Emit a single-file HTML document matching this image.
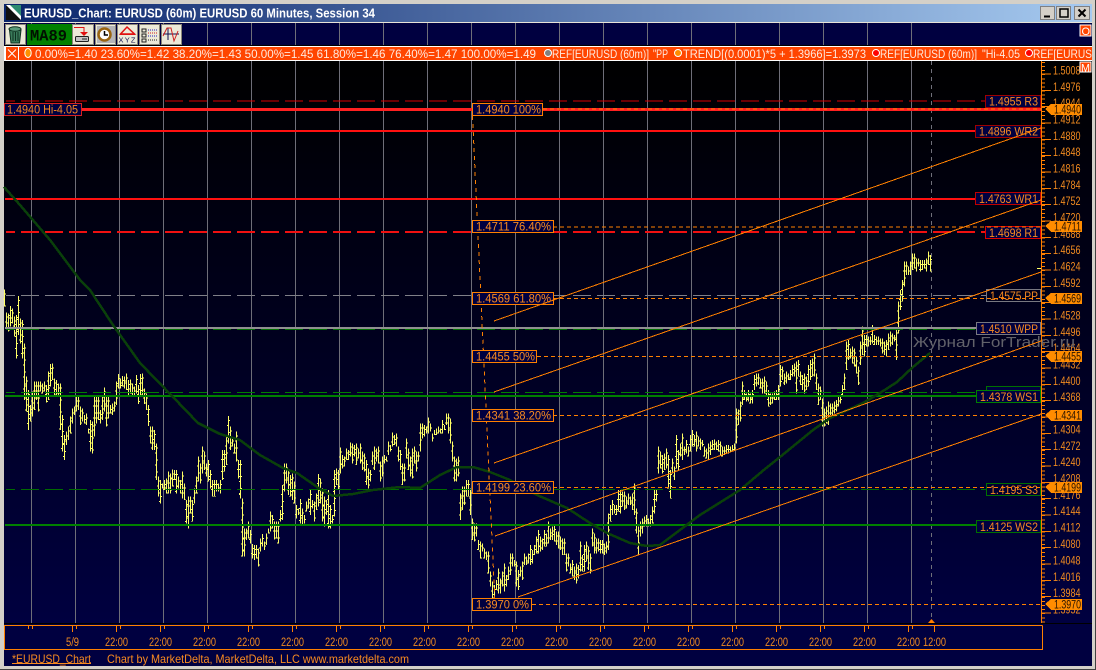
<!DOCTYPE html>
<html><head><meta charset="utf-8"><title>EURUSD_Chart</title>
<style>html,body{margin:0;padding:0;background:#d4d0c8;width:1096px;height:670px;overflow:hidden}svg{display:block}text{font-family:"Liberation Sans","Noto Sans CJK SC",sans-serif}</style></head>
<body>
<svg width="1096" height="670" viewBox="0 0 1096 670" xmlns="http://www.w3.org/2000/svg">
<defs>
<linearGradient id="tg" x1="0" x2="1" y1="0" y2="0"><stop offset="0" stop-color="#0a246a"/><stop offset="1" stop-color="#a6caf0"/></linearGradient>
<linearGradient id="bg" x1="0" x2="0" y1="0" y2="1"><stop offset="0" stop-color="#000"/><stop offset=".08" stop-color="#000004"/><stop offset="1" stop-color="#000040"/></linearGradient>
</defs>
<rect width="1096" height="670" fill="#d4d0c8"/>
<rect x="1095" width="1" height="670" fill="#404040"/><rect y="669" width="1096" height="1" fill="#404040"/>
<rect x="4" y="4" width="1088" height="18" fill="url(#tg)"/>
<rect x="4" y="22" width="1088" height="1" fill="#e8e4d8"/>
<rect x="4" y="23" width="1088" height="22" fill="#000040"/>
<rect x="4" y="45" width="1088" height="1" fill="#000"/>
<rect x="4" y="46" width="1088" height="15" fill="#fff"/>
<rect x="6" y="47" width="12" height="13" fill="#ff4500"/>
<rect x="19" y="47" width="1073" height="13" fill="#ff4500"/>
<rect x="4" y="61" width="1088" height="563" fill="url(#bg)"/>
<rect x="4" y="623" width="1088" height="1" fill="#000"/>
<rect x="4" y="624" width="1088" height="42" fill="#000040"/>

<!-- title icon -->
<rect x="6" y="5" width="15" height="15" fill="#fff"/><polygon points="6,5 6,20 21,20" fill="#101010"/><polygon points="10,5 21,5 21,16" fill="#2e8b70"/>
<text x="24" y="17.5" font-size="13" font-weight="bold" fill="#fff" textLength="351" lengthAdjust="spacingAndGlyphs">EURUSD_Chart: EURUSD (60m) EURUSD 60 Minutes, Session 34</text>

<!-- window buttons -->
<g fill="#d4d0c8" stroke="#808080"><rect x="1040.5" y="6.5" width="14" height="13"/><rect x="1056.5" y="6.5" width="14" height="13"/><rect x="1074.5" y="6.5" width="15" height="13"/></g>
<path d="M1044 16.5h6" stroke="#000" stroke-width="2"/><rect x="1060" y="9" width="8" height="8" fill="none" stroke="#000" stroke-width="1.5"/><path d="M1078.5 9.5l7 7M1085.5 9.5l-7 7" stroke="#000" stroke-width="2"/>

<!-- grid -->
<g shape-rendering="crispEdges">
<path d="M31.5 23V45M75.5 23V45M119.5 23V45M163.5 23V45M207.5 23V45M251.5 23V45M295.5 23V45M339.5 23V45M383.5 23V45M427.5 23V45M471.5 23V45M515.5 23V45M559.5 23V45M603.5 23V45M647.5 23V45M691.5 23V45M735.5 23V45M779.5 23V45M823.5 23V45M867.5 23V45M911.5 23V45M31.5 61V623M75.5 61V623M119.5 61V623M163.5 61V623M207.5 61V623M251.5 61V623M295.5 61V623M339.5 61V623M383.5 61V623M427.5 61V623M471.5 61V623M515.5 61V623M559.5 61V623M603.5 61V623M647.5 61V623M691.5 61V623M735.5 61V623M779.5 61V623M823.5 61V623M867.5 61V623M911.5 61V623" stroke="#6e6e78" fill="none"/>
<path d="M931.5 61V620" stroke="#70707a" stroke-dasharray="4 4" fill="none"/>

<!-- price bars -->
<g id="bars" stroke="#ffff66" stroke-width="3" fill="none">
<path transform="translate(-.17,280) scale(.33333)" d="M14 28V80M20 98V145M26 100V155M32 78V140M38 85V130M44 110V170M50 105V235M56 48V165M62 115V190M68 120V235M74 190V360M80 290V395M86 330V450M92 375V425M98 335V410M104 305V390M110 305V360M116 305V395M122 305V335M128 310V340M134 305V335M140 315V368M146 275V360M152 252V320M158 250V300M164 295V345M170 300V345M176 310V345M182 310V450M188 405V515M194 465V540M200 455V495M206 440V480M212 410V460M218 385V430M224 380V405M230 350V395M236 350V390M242 380V435M248 385V425M254 405V430M260 400V435M266 445V460M272 420V515M278 425V520M284 350V470M290 350V430M296 350V420M302 390V430M308 350V420M314 322V395M320 350V440M326 350V415M332 375V400M338 370V405M344 365V395M350 305V375M356 282V325M362 295V325M368 288V320M374 290V325M380 280V330M386 300V345M392 298V340M398 310V345M404 320V345M410 285V340M416 315V372M422 282V345M428 280V345M434 325V372M440 340V390M446 375V438M452 440V490M458 440V510M464 450V510M470 490V600M476 590V650M482 600V670M488 610V625M494 600V630M500 595V640M506 575V640M512 580V640M518 568V620M524 570V600M530 570V640M536 590V625M542 600V640M548 575V655M554 610V660M560 660V730M566 650V745M572 650V700M578 660V725M584 625V670M590 590V640M596 530V605M602 550V610M608 500V580M614 515V570M620 550V590M626 540V605M632 570V625M638 600V650M644 600V650M650 600V635M656 610V635M662 600V640M668 510V600M674 510V575M680 470V555M686 408V490M692 440V510M698 470V500M704 490V520M710 455V545M716 540V595M722 615V655"/>
<path transform="translate(239.83,400) scale(.33333)" d="M2 180V295M8 295V470M14 385V470M20 385V420M26 365V415M32 390V430M38 432V475M44 435V480M50 435V475M56 445V500M62 415V455M68 402V440M74 425V450M80 400V435M86 385V400M92 335V395M98 345V385M104 365V418M110 365V415M116 365V430M122 330V365M128 255V360M134 190V275M140 190V250M146 205V285M152 225V290M158 220V300M164 245V310M170 315V355M176 325V345M182 297V370M188 325V375M194 345V370M200 305V335M206 295V325M212 270V345M218 300V325M224 305V365M230 280V330M236 222V320M242 235V310M248 265V365M254 290V380M260 300V345M266 270V385M272 315V385M278 345V370M284 210V350M290 205V255M296 210V270M302 142V220M308 165V205M314 170V200M320 145V180M326 150V180M332 127V170M338 130V190M344 135V170M350 130V195M356 145V175M362 130V190M368 155V210M374 160V215M380 180V255M386 205V265M392 210V245M398 155V195M404 140V210M410 145V185M416 140V190M422 185V245M428 170V230M434 165V190M440 170V185M446 125V165M452 135V155M458 97V140M464 105V135M470 100V140M476 140V185M482 150V210M488 190V255M494 190V245M500 115V175M506 145V210M512 170V230M518 145V235M524 140V190M530 155V215M536 155V185M542 70V155M548 70V115M554 75V110M560 80V100M566 52V100M572 70V95M578 100V125M584 90V105M590 85V105M596 80V100M602 85V100M608 60V100M614 75V90M620 40V75"/>
<path transform="translate(440.5,390) scale(.33333)" d="M24 70V130M30 85V160M36 155V215M42 200V275M48 205V275M54 200V260M60 310V390M66 290V360M72 290V345M78 270V320M84 270V320M90 295V375M96 385V450M102 400V455M108 400V440M114 450V480M120 455V505M126 460V485M132 475V505M138 485V510M144 485V550M150 545V590M156 575V625M162 585V625M168 570V600M174 535V610M180 565V610M186 545V590M192 520V605M198 555V590M204 530V570M210 490V555M216 490V530M222 510V530M228 515V590M234 540V600M240 530V560M246 515V570M252 490V525M258 500V525M264 490V520M270 465V525M276 480V520M282 465V495M288 440V490M294 420V490M300 440V485M306 445V480M312 420V470M318 430V470M324 395V460M330 415V450M336 410V450M342 405V455M348 425V465M354 425V475M360 440V480M366 445V495M372 445V495M378 490V545M384 490V530M390 520V550M396 510V560M402 530V570M408 520V580M414 525V565M420 455V545M426 495V545M432 465V545M438 455V515M444 470V540M450 490V550M456 415V470M462 430V490M468 445V490M474 445V485M480 450V490M486 450V490M492 460V495M498 455V490M504 370V480M510 345V395M516 330V375M522 345V370M528 345V375M534 300V365M540 300V370M546 305V350M552 305V360M558 320V355M564 310V345M570 320V345M576 310V360M582 280V375M588 355V430M594 410V495M600 395V440M606 385V430M612 380V410M618 375V410M624 385V410M630 375V410M636 350V400M642 300V370M648 300V335M654 170V250M660 185V235M666 195V250M672 190V240M678 175V235M684 195V295M690 240V325M696 205V250M702 230V270M708 135V235M714 180V240"/>
<path transform="translate(680.5,230) scale(.33333)" d="M0 640V680M6 610V690M12 650V675M18 630V670M24 650V680M30 615V665M36 600V650M42 615V650M48 605V665M54 620V650M60 625V660M66 630V650M72 650V680M78 655V685M84 640V690M90 635V675M96 630V660M102 628V660M108 635V660M114 630V665M120 635V675M126 650V680M132 650V675M138 645V670M144 645V670M150 650V665M156 645V665M162 640V660M168 535V640M174 538V585M180 515V575M186 455V525M192 480V510M198 490V515M204 480V515M210 490V520M216 480V520M222 435V480M228 430V470M234 430V465M240 445V475M246 445V490M252 440V490M258 455V500M264 480V530M270 490V525M276 490V520M282 485V510M288 480V510M294 465V510M300 405V470M306 410V450M312 430V465M318 425V460M324 430V450M330 420V450M336 405V440M342 400V440M348 395V490M354 390V440M360 425V465M366 435V480M372 430V490M378 440V480M384 405V470M390 390V450M396 385V440M402 370V440M408 430V480M414 460V525M420 470V510M426 505V590M432 535V590M438 530V580M444 515V585M450 520V555M456 520V555M462 515V550M468 510V545M474 500V530M480 495V520M486 465V500M492 430V480M498 335V420M504 330V390M510 355V385M516 350V400M522 355V410M528 380V430M534 410V465M540 335V405M546 290V375M552 315V380M558 315V350M564 320V350M570 320V345M576 285V340M582 315V345M588 320V345M594 320V345M600 325V350M606 325V370M612 335V375M618 330V380M624 310V360M630 305V350M636 310V345M642 315V335M648 295V390M654 215V310M660 180V240M666 150V215M672 95V170M678 95V135M684 110V135M690 95V135M696 70V120M702 70V115M708 85V125M714 85V110M720 90V125M726 90V120M732 90V115M738 85V125M744 65V105M750 75V125"/>
</g>
<!-- open / close ticks -->
<use href="#bars" x="1" stroke-dasharray="3 33" stroke-dashoffset="-12"/>
<use href="#bars" x="-1" stroke-dasharray="3 33" stroke-dashoffset="-27"/>

<!-- level lines -->
<g fill="none">
<path d="M6 101H985" stroke="#d80000" stroke-dasharray="18 6" stroke-dashoffset="9"/>
<path d="M5 109.5H1041" stroke="#ff2020" stroke-width="3"/>
<path d="M5 131H975" stroke="#ff1010" stroke-width="2"/>
<path d="M5 199H975" stroke="#ff1010" stroke-width="2"/>
<path d="M6 232H985" stroke="#f01010" stroke-width="2" stroke-dasharray="18 6" stroke-dashoffset="9"/>
<path d="M6 295.5H986" stroke="#808088" stroke-dasharray="18 6" stroke-dashoffset="9"/>
<path d="M6 329.5H1041" stroke="#007000" stroke-dasharray="18 6" stroke-dashoffset="9"/>
<path d="M5 328H976" stroke="#909090" stroke-width="2"/>
<path d="M6 392.5H986" stroke="#008000" stroke-dasharray="18 6" stroke-dashoffset="9"/>
<path d="M5 396H976" stroke="#008000" stroke-width="2"/>
<path d="M6 489.5H986" stroke="#006c00" stroke-dasharray="18 6" stroke-dashoffset="9"/>
<path d="M5 525H976" stroke="#008000" stroke-width="2"/>
</g>

<!-- moving average -->
<path d="M4 187L20 205L50 240L80 280L90 290L113 325L140 363L173 397L198 423L220 434L240 440L260 455L283 468L297 473L320 489L333 496L353 494L373 490L400 487L420 488L440 475L457 467L473 467L490 472L510 480L537 495L567 508L590 523L607 533L630 543L647 546L660 545L680 530L700 515L740 490L765 469L780 457L813 430L830 418L863 403L880 393L897 382L913 367L930 353" fill="none" stroke="#0a400a" stroke-width="2.5" stroke-linejoin="round"/>

<path d="M472.5 116L495 604" stroke="#ff8000" fill="none" stroke-dasharray="4 4"/>

<!-- axis -->
<path d="M1041.5 61V623" stroke="#ff8000"/>
<path d="M1043 62V623" stroke="#ff8000" stroke-width="4" stroke-dasharray="1 3.083" fill="none"/>
<path d="M1046 57.2V623" stroke="#ff8000" stroke-width="10" stroke-dasharray="1 15.33" fill="none"/>
<rect x="1037" y="268" width="4" height="1" fill="#ffff66"/>
</g>

<g font-size="11.500" fill="#f08a20">
<text x="1053" y="74.5" textLength="27.5" lengthAdjust="spacingAndGlyphs">1.5008</text>
<text x="1053" y="91" textLength="27.5" lengthAdjust="spacingAndGlyphs">1.4976</text>
<text x="1053" y="107" textLength="27.5" lengthAdjust="spacingAndGlyphs">1.4944</text>
<text x="1053" y="123.5" textLength="27.5" lengthAdjust="spacingAndGlyphs">1.4912</text>
<text x="1053" y="140" textLength="27.5" lengthAdjust="spacingAndGlyphs">1.4880</text>
<text x="1053" y="156" textLength="27.5" lengthAdjust="spacingAndGlyphs">1.4848</text>
<text x="1053" y="172.5" textLength="27.5" lengthAdjust="spacingAndGlyphs">1.4816</text>
<text x="1053" y="189" textLength="27.5" lengthAdjust="spacingAndGlyphs">1.4784</text>
<text x="1053" y="205" textLength="27.5" lengthAdjust="spacingAndGlyphs">1.4752</text>
<text x="1053" y="221.5" textLength="27.5" lengthAdjust="spacingAndGlyphs">1.4720</text>
<text x="1053" y="238" textLength="27.5" lengthAdjust="spacingAndGlyphs">1.4688</text>
<text x="1053" y="254" textLength="27.5" lengthAdjust="spacingAndGlyphs">1.4656</text>
<text x="1053" y="270.5" textLength="27.5" lengthAdjust="spacingAndGlyphs">1.4624</text>
<text x="1053" y="287" textLength="27.5" lengthAdjust="spacingAndGlyphs">1.4592</text>
<text x="1053" y="319.5" textLength="27.5" lengthAdjust="spacingAndGlyphs">1.4528</text>
<text x="1053" y="336" textLength="27.5" lengthAdjust="spacingAndGlyphs">1.4496</text>
<text x="1053" y="352" textLength="27.5" lengthAdjust="spacingAndGlyphs">1.4464</text>
<text x="1053" y="368.5" textLength="27.5" lengthAdjust="spacingAndGlyphs">1.4432</text>
<text x="1053" y="385" textLength="27.5" lengthAdjust="spacingAndGlyphs">1.4400</text>
<text x="1053" y="401" textLength="27.5" lengthAdjust="spacingAndGlyphs">1.4368</text>
<text x="1053" y="433.5" textLength="27.5" lengthAdjust="spacingAndGlyphs">1.4304</text>
<text x="1053" y="450" textLength="27.5" lengthAdjust="spacingAndGlyphs">1.4272</text>
<text x="1053" y="466" textLength="27.5" lengthAdjust="spacingAndGlyphs">1.4240</text>
<text x="1053" y="482.5" textLength="27.5" lengthAdjust="spacingAndGlyphs">1.4208</text>
<text x="1053" y="499" textLength="27.5" lengthAdjust="spacingAndGlyphs">1.4176</text>
<text x="1053" y="515" textLength="27.5" lengthAdjust="spacingAndGlyphs">1.4144</text>
<text x="1053" y="531.5" textLength="27.5" lengthAdjust="spacingAndGlyphs">1.4112</text>
<text x="1053" y="548" textLength="27.5" lengthAdjust="spacingAndGlyphs">1.4080</text>
<text x="1053" y="564.5" textLength="27.5" lengthAdjust="spacingAndGlyphs">1.4048</text>
<text x="1053" y="581" textLength="27.5" lengthAdjust="spacingAndGlyphs">1.4016</text>
<text x="1053" y="597" textLength="27.5" lengthAdjust="spacingAndGlyphs">1.3984</text>
<text x="1053" y="613.5" textLength="27.5" lengthAdjust="spacingAndGlyphs">1.3952</text>
</g>

<!-- price tags -->
<g fill="#ff8c00" shape-rendering="crispEdges">
<polygon points="1045,109 1051,104 1082,104 1082,115 1051,115"/>
<polygon points="1045,226 1051,221 1082,221 1082,232 1051,232"/>
<polygon points="1045,298 1051,293 1082,293 1082,304 1051,304"/>
<polygon points="1045,356 1051,351 1082,351 1082,362 1051,362"/>
<polygon points="1045,415 1051,410 1082,410 1082,421 1051,421"/>
<polygon points="1045,487 1051,482 1082,482 1082,493 1051,493"/>
<polygon points="1045,604 1051,599 1082,599 1082,610 1051,610"/>
</g>
<g font-size="11.500" fill="#2a1400">
<text x="1054" y="113.5" textLength="27" lengthAdjust="spacingAndGlyphs">1.4940</text>
<text x="1054" y="230.5" textLength="27" lengthAdjust="spacingAndGlyphs">1.4711</text>
<text x="1054" y="302.5" textLength="27" lengthAdjust="spacingAndGlyphs">1.4569</text>
<text x="1054" y="360.5" textLength="27" lengthAdjust="spacingAndGlyphs">1.4455</text>
<text x="1054" y="419.5" textLength="27" lengthAdjust="spacingAndGlyphs">1.4341</text>
<text x="1054" y="491.5" textLength="27" lengthAdjust="spacingAndGlyphs">1.4199</text>
<text x="1054" y="608.5" textLength="27" lengthAdjust="spacingAndGlyphs">1.3970</text>
</g>

<!-- watermark -->
<text x="913" y="347" font-size="15" fill="#62626a" textLength="162" lengthAdjust="spacingAndGlyphs">Журнал ForTrader.ru</text>

<!-- level boxes -->
<g fill="#000040" stroke-width="1" shape-rendering="crispEdges">
<rect x="4.5" y="103.5" width="77" height="12" stroke="#d82020"/>
<g stroke="#ff8000">
<rect x="472.5" y="103.5" width="70" height="12"/>
<rect x="472.5" y="220.5" width="81" height="12"/>
<rect x="472.5" y="292.5" width="81" height="12"/>
<rect x="472.5" y="350.5" width="64" height="12"/>
<rect x="472.5" y="409.5" width="81" height="12"/>
<rect x="472.5" y="481.5" width="81" height="12"/>
<rect x="472.5" y="598.5" width="59" height="12"/>
</g>
<rect x="985.5" y="95.5" width="55" height="12" stroke="#a00000"/>
<rect x="975.5" y="125.5" width="65" height="12" stroke="#a00000"/>
<rect x="975.5" y="192.5" width="65" height="12" stroke="#c00000"/>
<rect x="985.5" y="226.5" width="55" height="12" stroke="#e00000"/>
<rect x="986.5" y="289.5" width="54" height="12" stroke="#787880" fill="none"/>
<rect x="976.5" y="322.5" width="64" height="12" stroke="#787880"/>
<rect x="986.5" y="386.5" width="54" height="12" stroke="#007000"/>
<rect x="976.5" y="390.5" width="64" height="12" stroke="#008000"/>
<rect x="986.5" y="483.5" width="54" height="12" stroke="#007000" fill="none"/>
<rect x="976.5" y="520.5" width="64" height="12" stroke="#007000"/>
</g>
<g font-size="11.500" fill="#f88a20">
<text x="7" y="113.5" textLength="71" lengthAdjust="spacingAndGlyphs">1.4940 Hi-4.05</text>
<text x="476" y="113.5" textLength="65" lengthAdjust="spacingAndGlyphs">1.4940 100%</text>
<text x="476" y="230.5" textLength="75" lengthAdjust="spacingAndGlyphs">1.4711 76.40%</text>
<text x="476" y="302.5" textLength="75" lengthAdjust="spacingAndGlyphs">1.4569 61.80%</text>
<text x="476" y="360.5" textLength="59" lengthAdjust="spacingAndGlyphs">1.4455 50%</text>
<text x="476" y="419.5" textLength="75" lengthAdjust="spacingAndGlyphs">1.4341 38.20%</text>
<text x="476" y="491.5" textLength="75" lengthAdjust="spacingAndGlyphs">1.4199 23.60%</text>
<text x="476" y="608.5" textLength="53" lengthAdjust="spacingAndGlyphs">1.3970 0%</text>
<text x="989" y="105.5" textLength="49" lengthAdjust="spacingAndGlyphs">1.4955 R3</text>
<text x="979" y="135.5" textLength="59" lengthAdjust="spacingAndGlyphs">1.4896 WR2</text>
<text x="979" y="203" textLength="59" lengthAdjust="spacingAndGlyphs">1.4763 WR1</text>
<text x="989" y="237" textLength="49" lengthAdjust="spacingAndGlyphs">1.4698 R1</text>
<text x="990" y="300" textLength="48" lengthAdjust="spacingAndGlyphs">1.4575 PP</text>
<text x="980" y="333" textLength="58" lengthAdjust="spacingAndGlyphs">1.4510 WPP</text>
<text x="980" y="401" textLength="58" lengthAdjust="spacingAndGlyphs">1.4378 WS1</text>
<text x="990" y="494" textLength="48" lengthAdjust="spacingAndGlyphs">1.4195 S3</text>
<text x="980" y="531" textLength="58" lengthAdjust="spacingAndGlyphs">1.4125 WS2</text>
</g>

<!-- channels and fib levels draw over the level boxes -->
<g shape-rendering="crispEdges" fill="none" stroke="#ff8000">
<path d="M494 321L1041 128"/><path d="M494 392L1041 200"/><path d="M494 463L1041 272"/><path d="M495 536L1041 341"/><path d="M518 597L1041 414"/>
<path stroke-dasharray="4 3" d="M543 109H1041M553 227H1041M553 298.5H1041M537 356.5H1041M553 415.5H1041M553 487.5H1041M532 604.5H1041"/>
</g>

<!-- legend -->
<path d="M8 49.5l8 8M16 49.5l-8 8" stroke="#fff" stroke-width="1"/>
<ellipse cx="28" cy="53" rx="3.2" ry="4.5" fill="#ff9000" stroke="#fff"/>
<circle cx="548" cy="53" r="3.5" fill="#808080" stroke="#fff"/>
<circle cx="678" cy="53" r="3.5" fill="#ff8c00" stroke="#fff"/>
<circle cx="876" cy="53" r="3.5" fill="#ff0000" stroke="#fff"/>
<circle cx="1029" cy="53" r="3.5" fill="#ff0000" stroke="#fff"/>
<g font-size="12" fill="#ffe8dc">
<text x="35" y="58" textLength="501" lengthAdjust="spacingAndGlyphs">0.00%=1.40 23.60%=1.42 38.20%=1.43 50.00%=1.45 61.80%=1.46 76.40%=1.47 100.00%=1.49</text>
<text x="552" y="58" textLength="97" lengthAdjust="spacingAndGlyphs">REF[EURUSD (60m)]</text>
<text x="653" y="58" textLength="15" lengthAdjust="spacingAndGlyphs">"PP</text>
<text x="683" y="58" textLength="183" lengthAdjust="spacingAndGlyphs">TREND[(0.0001)*5 + 1.3966]=1.3973</text>
<text x="880" y="58" textLength="97" lengthAdjust="spacingAndGlyphs">REF[EURUSD (60m)]</text>
<text x="982" y="58" textLength="38" lengthAdjust="spacingAndGlyphs">"Hi-4.05</text>
<text x="1033" y="58" textLength="59" lengthAdjust="spacingAndGlyphs">REF[EURUS</text>
</g>

<!-- O and M boxes -->
<rect x="1080" y="25" width="11" height="11" fill="#ff4500" stroke="#fff"/><text x="1081.5" y="35" font-size="11" fill="#fff">O</text>
<rect x="1080" y="62" width="11" height="10" fill="#ff4500" stroke="#fff"/><text x="1081" y="71.5" font-size="11" fill="#fff" textLength="9" lengthAdjust="spacingAndGlyphs">M</text>

<!-- toolbar -->
<g fill="#ece9d8" stroke="#8a8678" shape-rendering="crispEdges">
<rect x="5.5" y="24.5" width="20" height="20"/>
<rect x="72.5" y="24.5" width="21" height="20"/>
<rect x="95.5" y="24.5" width="20" height="20"/>
<rect x="117.5" y="24.5" width="20" height="20"/>
<rect x="139.5" y="24.5" width="20" height="20"/>
<rect x="161.5" y="24.5" width="20" height="20"/>
</g>
<rect x="27" y="24" width="45" height="21" fill="#008000"/>
<text x="30" y="40.5" font-size="15.5" font-weight="bold" fill="#001000" textLength="37" lengthAdjust="spacingAndGlyphs" style="font-family:'Liberation Mono',monospace">MA89</text>
<!-- trash -->
<path d="M9.5 30H21L19.5 43H11Z" fill="#3a7a5a" stroke="#0e3020"/><ellipse cx="15" cy="29" rx="6" ry="2.2" fill="#5a9a7a" stroke="#0e3020"/><path d="M13 32V41M15.5 32V41M18 32V41" stroke="#0e3020"/>
<!-- export -->
<path d="M74 27.5H84V33" fill="none" stroke="#e01010"/><polygon points="80,32 88,32 84,36" fill="#e01010"/><rect x="75.5" y="36.5" width="13" height="5" rx="1" fill="#c4c4c4" stroke="#202020"/><path d="M82 39h5" stroke="#202020"/>
<!-- clock -->
<rect x="97" y="26" width="18" height="17" fill="#b4b4b8"/><circle cx="104.5" cy="34.5" r="6" fill="#fff" stroke="#9a6410" stroke-width="2.5"/><path d="M104.5 31V35H108" fill="none" stroke="#000" stroke-width="1.5"/>
<!-- xyz -->
<path d="M120.5 34L127 27L134.5 34Z" fill="none" stroke="#e01010" stroke-width="1.5"/><path d="M120 34.5H135" stroke="#e01010"/><text x="118.5" y="42.5" font-size="7.5" fill="#101050" textLength="17" lengthAdjust="spacing">XYZ</text>
<!-- list -->
<path d="M142 29h4v3h-4zM142 34h4v3h-4zM142 39h4v3h-4z" fill="none" stroke="#202020"/>
<path d="M148 30h9" stroke="#2020c0" stroke-dasharray="1 1"/><path d="M148 33h9" stroke="#d02020" stroke-dasharray="1 1"/><path d="M148 36h9" stroke="#2020c0" stroke-dasharray="1 1"/><path d="M148 40h9" stroke="#202020" stroke-dasharray="1 1"/>
<!-- chart -->
<path d="M163 34H179M168 28V40" stroke="#101050" fill="none"/><path d="M163 36L167 28H171L174 41L178 31" fill="none" stroke="#d02020"/>

<!-- bottom -->
<polygon points="928,623 931.5,619 935,623" fill="#ff8000"/>
<g shape-rendering="crispEdges" fill="none" stroke="#ff8000">
<path d="M1042.5 625.5H4.5V649.5H1042.5V625.5"/>
<path d="M72 629H940" stroke-width="6" stroke-dasharray="1 43"/>
<path d="M28 627.5H925" stroke-width="3" stroke-dasharray="1 3 1 39"/>
<path d="M934.5 626V632"/>
</g>
<g font-size="11.500" fill="#f08a20">
<text x="66" y="646" textLength="13" lengthAdjust="spacingAndGlyphs">5/9</text>
<text x="105" y="646" textLength="23" lengthAdjust="spacingAndGlyphs">22:00</text>
<text x="149" y="646" textLength="23" lengthAdjust="spacingAndGlyphs">22:00</text>
<text x="193" y="646" textLength="23" lengthAdjust="spacingAndGlyphs">22:00</text>
<text x="237" y="646" textLength="23" lengthAdjust="spacingAndGlyphs">22:00</text>
<text x="281" y="646" textLength="23" lengthAdjust="spacingAndGlyphs">22:00</text>
<text x="325" y="646" textLength="23" lengthAdjust="spacingAndGlyphs">22:00</text>
<text x="369" y="646" textLength="23" lengthAdjust="spacingAndGlyphs">22:00</text>
<text x="413" y="646" textLength="23" lengthAdjust="spacingAndGlyphs">22:00</text>
<text x="457" y="646" textLength="23" lengthAdjust="spacingAndGlyphs">22:00</text>
<text x="501" y="646" textLength="23" lengthAdjust="spacingAndGlyphs">22:00</text>
<text x="545" y="646" textLength="23" lengthAdjust="spacingAndGlyphs">22:00</text>
<text x="589" y="646" textLength="23" lengthAdjust="spacingAndGlyphs">22:00</text>
<text x="633" y="646" textLength="23" lengthAdjust="spacingAndGlyphs">22:00</text>
<text x="677" y="646" textLength="23" lengthAdjust="spacingAndGlyphs">22:00</text>
<text x="721" y="646" textLength="23" lengthAdjust="spacingAndGlyphs">22:00</text>
<text x="765" y="646" textLength="23" lengthAdjust="spacingAndGlyphs">22:00</text>
<text x="809" y="646" textLength="23" lengthAdjust="spacingAndGlyphs">22:00</text>
<text x="853" y="646" textLength="23" lengthAdjust="spacingAndGlyphs">22:00</text>
<text x="897" y="646" textLength="23" lengthAdjust="spacingAndGlyphs">22:00</text>
<text x="923" y="646" textLength="23" lengthAdjust="spacingAndGlyphs">12:00</text>
</g>
<g font-size="12" fill="#f88a20">
<text x="12" y="663" textLength="79" lengthAdjust="spacingAndGlyphs">*EURUSD_Chart</text>
<text x="107" y="663" textLength="302" lengthAdjust="spacingAndGlyphs">Chart by MarketDelta, MarketDelta, LLC www.marketdelta.com</text>
</g>
<path d="M12 663.5H91" stroke="#f88a20" shape-rendering="crispEdges"/>
</svg>
</body></html>
